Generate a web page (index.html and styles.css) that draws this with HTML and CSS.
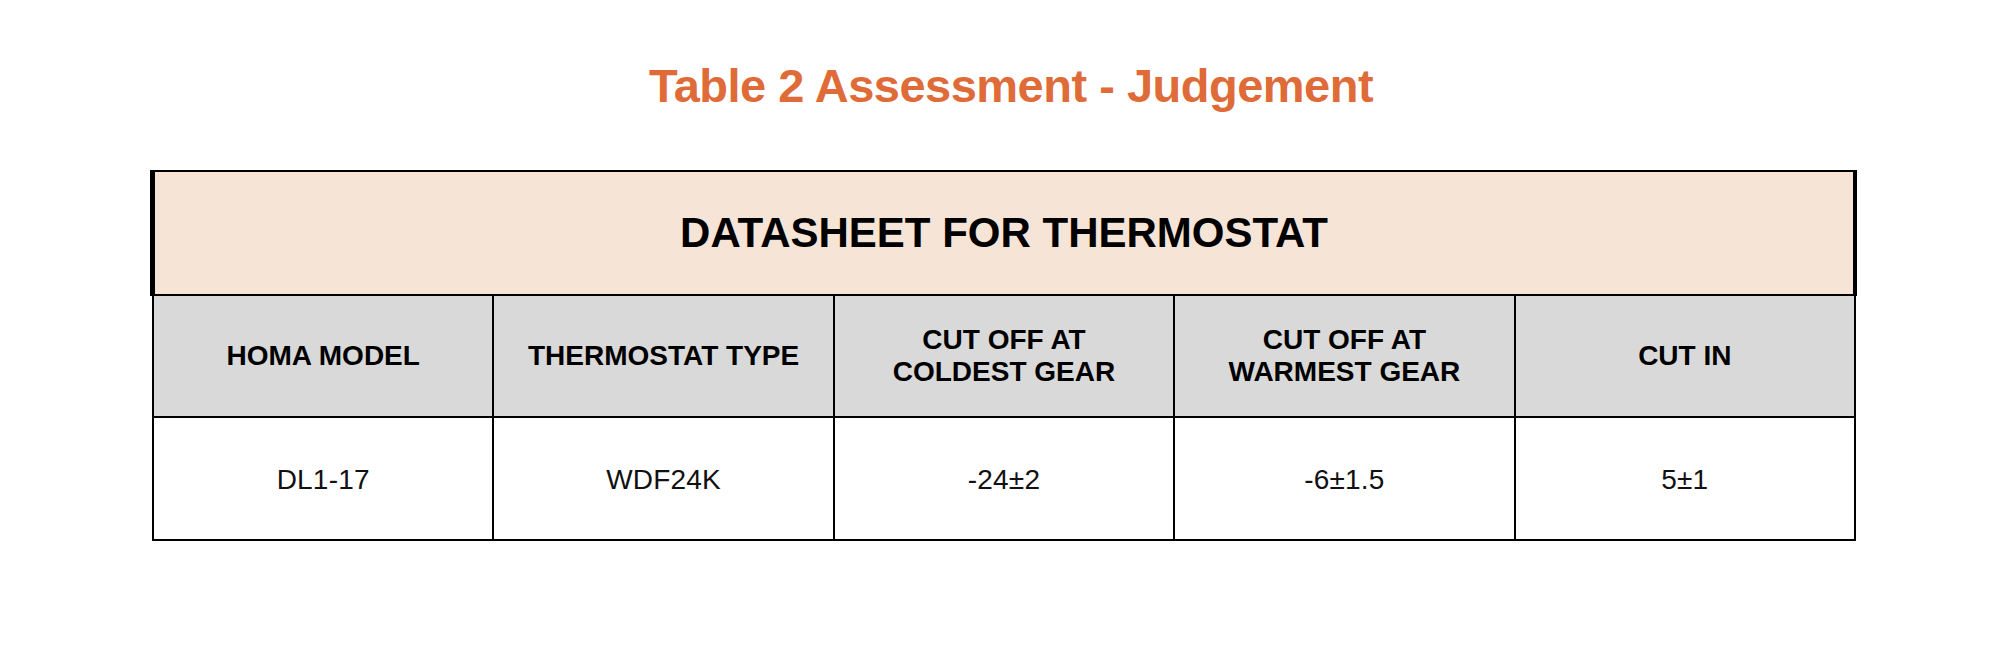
FILE: index.html
```html
<!DOCTYPE html>
<html>
<head>
<meta charset="utf-8">
<link rel="stylesheet" href="styles.css">
</head>
<body>
<div class="page">
  <h1 class="title">Table 2 Assessment - Judgement</h1>
  <div class="sheet">
    <div class="banner">DATASHEET FOR THERMOSTAT</div>
    <div class="grid">
      <div class="cell head">HOMA MODEL</div>
      <div class="cell head">THERMOSTAT TYPE</div>
      <div class="cell head">CUT OFF AT<br>COLDEST GEAR</div>
      <div class="cell head">CUT OFF AT<br>WARMEST GEAR</div>
      <div class="cell head">CUT IN</div>
      <div class="cell data">DL1-17</div>
      <div class="cell data">WDF24K</div>
      <div class="cell data">-24±2</div>
      <div class="cell data">-6±1.5</div>
      <div class="cell data">5±1</div>
    </div>
  </div>
</div>
</body>
</html>
```

FILE: styles.css
```css
html, body {
  margin: 0;
  padding: 0;
  background: #ffffff;
}

body {
  width: 2012px;
  height: 656px;
  font-family: "Liberation Sans", Arial, Helvetica, sans-serif;
  color: #000;
}

.page {
  padding-top: 62px;
}

.title {
  margin: 0 0 61px 0;
  height: 47px;
  font-size: 47px;
  line-height: 47px;
  font-weight: 700;
  letter-spacing: -0.5px;
  color: #de6b38;
  text-align: center;
  padding-left: 10px;
}

.sheet {
  margin-left: 150px;
  width: 1707px;
}

.banner {
  height: 122px;
  border-top: 2px solid #000;
  border-bottom: 2px solid #000;
  border-left: 5px solid #000;
  border-right: 4px solid #000;
  background: #f6e4d7;
  display: flex;
  align-items: center;
  justify-content: center;
  font-size: 42px;
  font-weight: 700;
  letter-spacing: 0;
}

.grid {
  margin-left: 2px;
  width: 1704px;
  box-sizing: border-box;
  display: grid;
  grid-template-columns: repeat(5, 1fr);
  grid-template-rows: 120px 121px;
  gap: 2px;
  padding: 0 2px 2px 2px;
  background: #000;
}

.cell {
  display: flex;
  align-items: center;
  justify-content: center;
  text-align: center;
  font-size: 28px;
}

.head {
  background: #d9d9d9;
  font-weight: 700;
  line-height: 32px;
  letter-spacing: 0;
}

.data {
  background: #fff;
  font-weight: 400;
  color: #111;
  padding-top: 2px;
  letter-spacing: 0.2px;
}
```
